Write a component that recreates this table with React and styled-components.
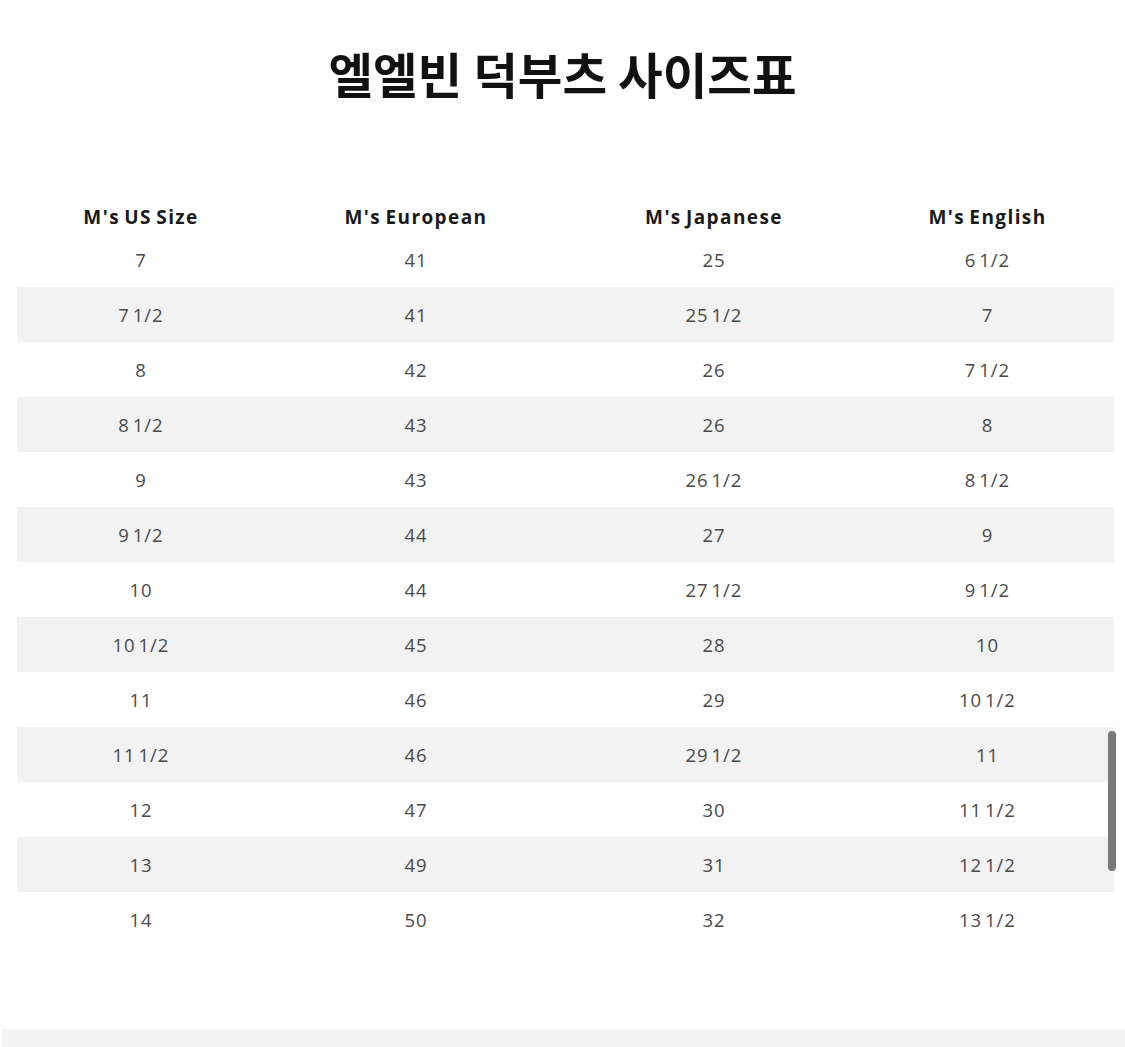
import React from "react";
import styled, { createGlobalStyle } from "styled-components";

const Global = createGlobalStyle`
  html, body { margin: 0; padding: 0; background: #ffffff; }
  body { font-family: "Open Sans", "Noto Sans", "Noto Sans CJK KR", sans-serif; }
`;

const Page = styled.div`
  position: relative;
  width: 1125px;
  height: 1047px;
  overflow: hidden;
  background: #fff;
`;

const Title = styled.h1`
  margin: 0;
  padding-top: 42px;
  height: 62px;
  line-height: 62px;
  text-align: center;
  font-family: "Noto Sans CJK KR", "Noto Sans", sans-serif;
  font-weight: 700;
  font-size: 48.5px;
  color: #111;
  letter-spacing: 0px;
`;

const TableWrap = styled.div`
  margin: 87px 11px 0 17px;
`;

const Table = styled.table`
  width: 1097px;
  border-collapse: collapse;
  table-layout: fixed;
`;

const HeadCell = styled.th`
  height: 38px;
  padding: 0 0 3px 0;
  vertical-align: bottom;
  text-align: center;
  font-family: "Open Sans", sans-serif;
  font-weight: 700;
  font-size: 19px;
  line-height: 24px;
  color: #1a1a1a;
  letter-spacing: 1.4px;
  word-spacing: -2px;
`;

const Row = styled.tr`
  height: 55px;
  background: ${(p) => (p.$shaded ? "#f2f2f2" : "#ffffff")};
`;

const Cell = styled.td`
  padding: 0;
  text-align: center;
  vertical-align: middle;
  font-family: "Open Sans", sans-serif;
  font-weight: 400;
  font-size: 18.5px;
  color: #4a4a4a;
  letter-spacing: 1px;
  word-spacing: -3px;
`;

const Footer = styled.div`
  margin: 82px 0 0 2px;
  height: 30px;
  background: #f4f4f4;
`;

const ScrollThumb = styled.div`
  position: absolute;
  left: 1108px;
  top: 731px;
  width: 8px;
  height: 140px;
  border-radius: 4px;
  background: #7a7a7a;
`;

const columns = ["M's US Size", "M's European", "M's Japanese", "M's English"];
const widths = [248, 302, 294, 253];

const rows = [
  ["7", "41", "25", "6 1/2"],
  ["7 1/2", "41", "25 1/2", "7"],
  ["8", "42", "26", "7 1/2"],
  ["8 1/2", "43", "26", "8"],
  ["9", "43", "26 1/2", "8 1/2"],
  ["9 1/2", "44", "27", "9"],
  ["10", "44", "27 1/2", "9 1/2"],
  ["10 1/2", "45", "28", "10"],
  ["11", "46", "29", "10 1/2"],
  ["11 1/2", "46", "29 1/2", "11"],
  ["12", "47", "30", "11 1/2"],
  ["13", "49", "31", "12 1/2"],
  ["14", "50", "32", "13 1/2"],
];

export default function App() {
  return (
    <Page>
      <Global />
      <Title>엘엘빈 덕부츠 사이즈표</Title>
      <TableWrap>
        <Table>
          <colgroup>
            {widths.map((w, i) => (
              <col key={i} style={{ width: w }} />
            ))}
          </colgroup>
          <thead>
            <tr>
              {columns.map((c) => (
                <HeadCell key={c}>{c}</HeadCell>
              ))}
            </tr>
          </thead>
          <tbody>
            {rows.map((r, i) => (
              <Row key={i} $shaded={i % 2 === 1}>
                {r.map((v, j) => (
                  <Cell key={j}>{v}</Cell>
                ))}
              </Row>
            ))}
          </tbody>
        </Table>
      </TableWrap>
      <Footer />
      <ScrollThumb />
    </Page>
  );
}
